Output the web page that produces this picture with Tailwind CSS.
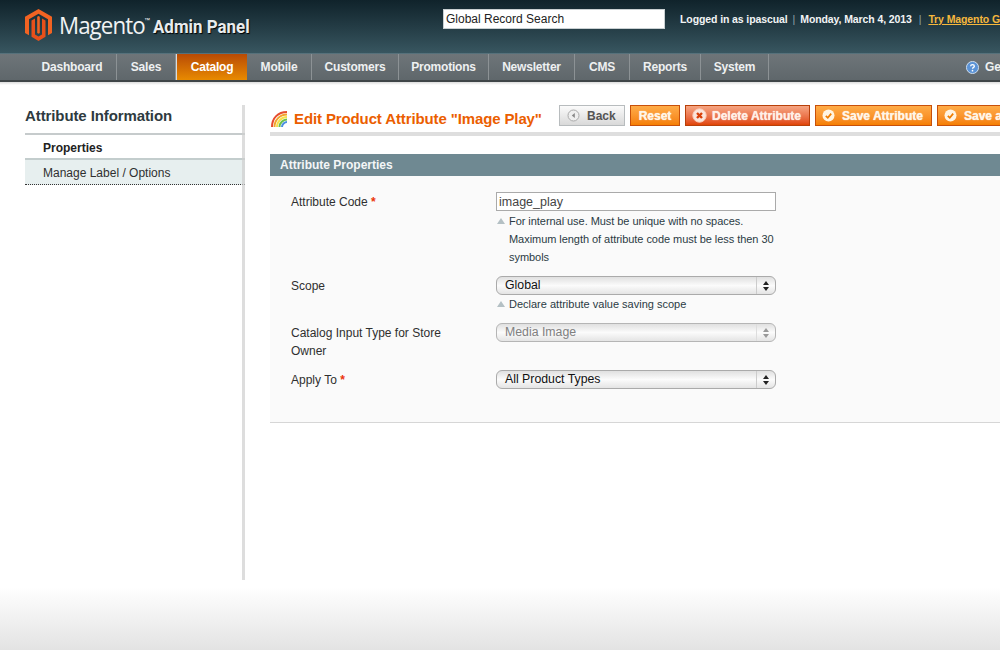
<!DOCTYPE html>
<html><head><meta charset="utf-8"><script src="https://cdn.jsdelivr.net/npm/@tailwindcss/browser@4"></script></head>
<body class="m-0 bg-white">
<div class="w-[1000px] h-[650px] overflow-hidden flex flex-col font-['Liberation_Sans',Arial,sans-serif] text-[#2f2f2f] bg-white">
  <!-- header -->
  <header class="h-[53px] shrink-0 flex bg-gradient-to-b from-[#10232b] to-[#385660]">
    <div class="w-[443px] shrink-0 pl-[25px] flex items-center h-[50px]">
      <svg width="27" height="32" viewBox="0 0 27 32" class="shrink-0">
        <path d="M13.5 0 L27 7.8 V24 L23 26.3 V10.2 L13.5 4.7 L4 10.2 V26.3 L0 24 V7.8 Z" fill="#f26322"/>
        <path d="M6.5 11.6 L10 9.6 V25.5 L13.5 27.6 L17 25.5 V9.6 L20.5 11.6 V27.8 L13.5 32 L6.5 27.8 Z" fill="#e8501a"/>
        <path d="M12.2 7.8 L13.5 7 L14.8 7.8 V24 L13.5 24.8 L12.2 24 Z" fill="#f26322"/>
      </svg>
      <span class="ml-[7px] w-[85px] shrink-0 text-[24px] leading-none text-[#f1f3f4] tracking-[-1px] font-['Open_Sans'] scale-x-[0.93] origin-left whitespace-nowrap">Magento</span>
      <span class="w-[9px] shrink-0 text-[6px] text-white self-start mt-[16px]">™</span>
      <span class="text-[19px] font-bold text-[#e8ecee] mt-[5px] font-['Roboto'] [text-shadow:1px_1px_1px_#000] scale-x-[0.89] origin-left whitespace-nowrap">Admin Panel</span>
    </div>
    <div class="w-[222px] h-[20px] mt-[9px] bg-white border border-[#c9d0d2] pl-[2px] text-[12px] leading-[18px] text-[#222] shrink-0">Global Record Search</div>
    <div class="ml-[15px] mt-[13px] flex text-[10.5px] leading-[13px] font-bold text-[#f2f4f5] whitespace-nowrap tracking-[-0.1px]">
      <span>Logged in as ipascual</span>
      <span class="mx-[5px] font-normal text-[#8fa3aa]">|</span>
      <span>Monday, March 4, 2013</span>
      <span class="mx-[7px] font-normal text-[#8fa3aa]">|</span>
      <span class="text-[#f6b73c] underline">Try Magento Go for Free</span>
    </div>
  </header>
  <!-- nav -->
  <nav class="h-[29px] shrink-0 border-t border-[#56717b] border-b-2 border-b-[#3f4548] bg-gradient-to-b from-[#6e7579] to-[#5f676b] flex pl-[28px] text-[12px] font-bold text-[#eef0f1] leading-[26px] tracking-[-0.2px] whitespace-nowrap">
    <span class="w-[89px] shrink-0 text-center border-r border-[#8c9295]">Dashboard</span>
    <span class="w-[59px] shrink-0 text-center border-r border-[#8c9295]">Sales</span>
    <span class="w-[71px] shrink-0 text-center text-white bg-gradient-to-b from-[#b84a05] to-[#e88a00] border-l border-[#d9dcdd]">Catalog</span>
    <span class="w-[65px] shrink-0 text-center border-r border-[#8c9295]">Mobile</span>
    <span class="w-[87px] shrink-0 text-center border-r border-[#8c9295]">Customers</span>
    <span class="w-[90px] shrink-0 text-center border-r border-[#8c9295]">Promotions</span>
    <span class="w-[86px] shrink-0 text-center border-r border-[#8c9295]">Newsletter</span>
    <span class="w-[55px] shrink-0 text-center border-r border-[#8c9295]">CMS</span>
    <span class="w-[71px] shrink-0 text-center border-r border-[#8c9295]">Reports</span>
    <span class="w-[68px] shrink-0 text-center border-r border-[#8c9295]">System</span>
    <span class="ml-[197px] shrink-0 flex items-center gap-[6px]">
      <svg width="13" height="13" viewBox="0 0 14 14" class="shrink-0"><circle cx="7" cy="7" r="6.5" fill="#5b93d6" stroke="#d5e3f2"/><path d="M5 5.6 C5 3.4 9 3.4 9 5.6 C9 7 7 6.8 7 8.4" fill="none" stroke="#fff" stroke-width="1.4"/><circle cx="7" cy="10.4" r="0.9" fill="#fff"/></svg>
      Get help for this page
    </span>
  </nav>
  <div class="h-[3px] shrink-0 bg-gradient-to-b from-[#dcdcdc] to-white"></div>
  <!-- main -->
  <main class="flex-1 flex min-h-0">
    <aside class="relative w-[220px] ml-[25px] h-[475px] mt-[20px] shrink-0">
      <div class="absolute top-0 bottom-0 right-0 w-[3px] bg-[#cfcfcf]/70"></div>
      <h3 class="h-[30px] border-b-2 border-[#c6cbcc] text-[15px] font-bold leading-[21px] tracking-[-0.1px] text-[#2e3a40]">Attribute Information</h3>
      <div class="h-[25px] border-b-2 border-[#c3cdcd] pl-[18px] text-[12px] font-bold leading-[26px] text-[#222]">Properties</div>
      <div class="h-[25px] bg-[#e7efef] border-b border-dotted border-[#333] pl-[18px] text-[12px] leading-[27px] text-[#2f2f2f]">Manage Label / Options</div>
    </aside>
    <section class="flex-1 min-w-0 pl-[25px] pt-[20px]">
      <div class="h-[31px] border-b-4 border-[#dedede] w-[730px] flex items-start whitespace-nowrap overflow-hidden">
        <svg width="18" height="17" viewBox="0 0 18 17" class="mt-[5px] shrink-0" fill="none" stroke-width="2">
          <path d="M2 17 C2 8 8 2 17 2" stroke="#e64d2e"/>
          <path d="M4.5 17 C4.5 10 10 4.5 17 4.5" stroke="#f2a32c"/>
          <path d="M7 17 C7 11.5 11.5 7 17 7" stroke="#f5e04b"/>
          <path d="M9.5 17 C9.5 13 13 9.5 17 9.5" stroke="#6cc04a"/>
          <path d="M12 17 C12 14.5 14.5 12 17 12" stroke="#4a8fe0"/>
        </svg>
        <h3 class="ml-[6px] text-[15px] font-bold text-[#eb5e00] leading-[27px] tracking-[-0.12px] w-[265px] shrink-0">Edit Product Attribute "Image Play"</h3>
        <button class="h-[21px] w-[66px] shrink-0 border border-[#b8bcbe] bg-gradient-to-b from-[#fbfbfb] to-[#d9d9d9] flex items-center pl-[7px] text-[12px] font-bold text-[#555]">
          <svg width="13" height="13" viewBox="0 0 13 13" class="shrink-0"><circle cx="6.5" cy="6.5" r="5.5" fill="#eee" stroke="#aaa"/><path d="M7.8 4 L4.8 6.5 L7.8 9 Z" fill="#888"/></svg>
          <span class="ml-[7px]">Back</span>
        </button>
        <button class="h-[21px] w-[50px] ml-[5px] shrink-0 border border-[#c8500a] bg-gradient-to-b from-[#ffac47] to-[#f57f00] text-[12px] font-bold text-[#fff6e8] text-center [text-shadow:0_0_1px_#fff]">Reset</button>
        <button class="h-[21px] w-[125px] ml-[5px] shrink-0 border border-[#b8400a] bg-gradient-to-b from-[#f5a582] to-[#e04400] flex items-center pl-[6px] text-[12px] font-bold text-[#fff0e6] [text-shadow:0_0_1px_#fff]">
          <svg width="15" height="15" viewBox="0 0 15 15" class="shrink-0"><circle cx="7.5" cy="7.5" r="6.7" fill="#fbe6dc" stroke="#f9c9b4"/><path d="M5 5 L10 10 M10 5 L5 10" stroke="#d8400a" stroke-width="2.4"/></svg>
          <span class="ml-[5px]">Delete Attribute</span>
        </button>
        <button class="h-[21px] w-[117px] ml-[5px] shrink-0 border border-[#c8500a] bg-gradient-to-b from-[#ffac47] to-[#f57f00] flex items-center pl-[6px] text-[12px] font-bold text-[#fff6e8] [text-shadow:0_0_1px_#fff]">
          <svg width="13" height="13" viewBox="0 0 13 13" class="shrink-0"><circle cx="6.5" cy="6.5" r="6" fill="#fff4e2"/><path d="M3.8 6.8 L5.8 8.8 L9.2 4.6" fill="none" stroke="#ee7c00" stroke-width="1.7"/></svg>
          <span class="ml-[7px]">Save Attribute</span>
        </button>
        <button class="h-[21px] w-[160px] ml-[5px] shrink-0 border border-[#c8500a] bg-gradient-to-b from-[#ffac47] to-[#f57f00] flex items-center pl-[6px] text-[12px] font-bold text-[#fff6e8] [text-shadow:0_0_1px_#fff]">
          <svg width="13" height="13" viewBox="0 0 13 13" class="shrink-0"><circle cx="6.5" cy="6.5" r="6" fill="#fff4e2"/><path d="M3.8 6.8 L5.8 8.8 L9.2 4.6" fill="none" stroke="#ee7c00" stroke-width="1.7"/></svg>
          <span class="ml-[7px]">Save and Continue Edit</span>
        </button>
      </div>
      <div class="mt-[18px] h-[22px] w-[730px] bg-[#6f8992] pl-[10px] text-[12px] font-bold leading-[22px] text-[#f4f6f7]">Attribute Properties</div>
      <div class="w-[730px] h-[247px] bg-[#fafafa] border-b border-[#d6d6d6] pl-[21px] pt-[16px] text-[12px] text-[#2f2f2f]">
        <div class="flex h-[84px]">
          <div class="w-[205px] shrink-0 leading-[18px] mt-[1px]">Attribute Code <span class="text-[#eb340a] font-bold">*</span></div>
          <div class="w-[280px]">
            <div class="h-[19px] border border-[#aaa] bg-white pl-[2px] text-[12.5px] leading-[18px] text-[#444]">image_play</div>
            <div class="pl-[13px] text-[11px] leading-[18px] tracking-[-0.05px] mt-[1px] relative text-[#2b3a44]">
              <svg width="8" height="6" viewBox="0 0 8 6" class="absolute left-[1px] top-[6px]"><path d="M4 0 L8 6 H0 Z" fill="#b4c0c4"/></svg>
              For internal use. Must be unique with no spaces.<br>Maximum length of attribute code must be less then 30 symbols
            </div>
          </div>
        </div>
        <div class="flex h-[47px]">
          <div class="w-[205px] shrink-0 leading-[18px] mt-[1px]">Scope</div>
          <div class="w-[280px]">
            <div class="h-[19px] rounded-[6px] border border-[#aaa] bg-gradient-to-b from-[#e0e0e0] via-[#fbfbfb] to-[#e4e4e4] flex items-center justify-between pl-[8px] text-[12.3px] text-[#111] leading-[17px]">
              <span>Global</span>
              <span class="h-full w-[19px] border-l border-[#ccc] flex items-center justify-center"><svg width="6" height="10" viewBox="0 0 6 10"><path d="M3 0 L6 4 H0 Z M3 10 L6 6 H0 Z" fill="#222"/></svg></span>
            </div>
            <div class="pl-[13px] text-[11px] leading-[18px] relative text-[#2b3a44]">
              <svg width="8" height="6" viewBox="0 0 8 6" class="absolute left-[1px] top-[6px]"><path d="M4 0 L8 6 H0 Z" fill="#b4c0c4"/></svg>
              Declare attribute value saving scope
            </div>
          </div>
        </div>
        <div class="flex h-[47px]">
          <div class="w-[205px] shrink-0 leading-[18px] mt-[1px] pr-[20px]">Catalog Input Type for Store Owner</div>
          <div class="w-[280px]">
            <div class="h-[19px] rounded-[6px] border border-[#b5b5b5] bg-gradient-to-b from-[#e0e0e0] via-[#fbfbfb] to-[#e4e4e4] flex items-center justify-between pl-[8px] text-[12.3px] text-[#808080] leading-[17px]">
              <span>Media Image</span>
              <span class="h-full w-[19px] border-l border-[#ddd] flex items-center justify-center"><svg width="6" height="10" viewBox="0 0 6 10"><path d="M3 0 L6 4 H0 Z M3 10 L6 6 H0 Z" fill="#999"/></svg></span>
            </div>
          </div>
        </div>
        <div class="flex h-[19px]">
          <div class="w-[205px] shrink-0 leading-[18px] mt-[1px]">Apply To <span class="text-[#eb340a] font-bold">*</span></div>
          <div class="w-[280px]">
            <div class="h-[19px] rounded-[6px] border border-[#aaa] bg-gradient-to-b from-[#e0e0e0] via-[#fbfbfb] to-[#e4e4e4] flex items-center justify-between pl-[8px] text-[12.3px] text-[#111] leading-[17px]">
              <span>All Product Types</span>
              <span class="h-full w-[19px] border-l border-[#ccc] flex items-center justify-center"><svg width="6" height="10" viewBox="0 0 6 10"><path d="M3 0 L6 4 H0 Z M3 10 L6 6 H0 Z" fill="#222"/></svg></span>
            </div>
          </div>
        </div>
      </div>
    </section>
  </main>
  <footer class="h-[63px] shrink-0 bg-gradient-to-b from-white to-[#e3e3e3]"></footer>
</div>
</body></html>
